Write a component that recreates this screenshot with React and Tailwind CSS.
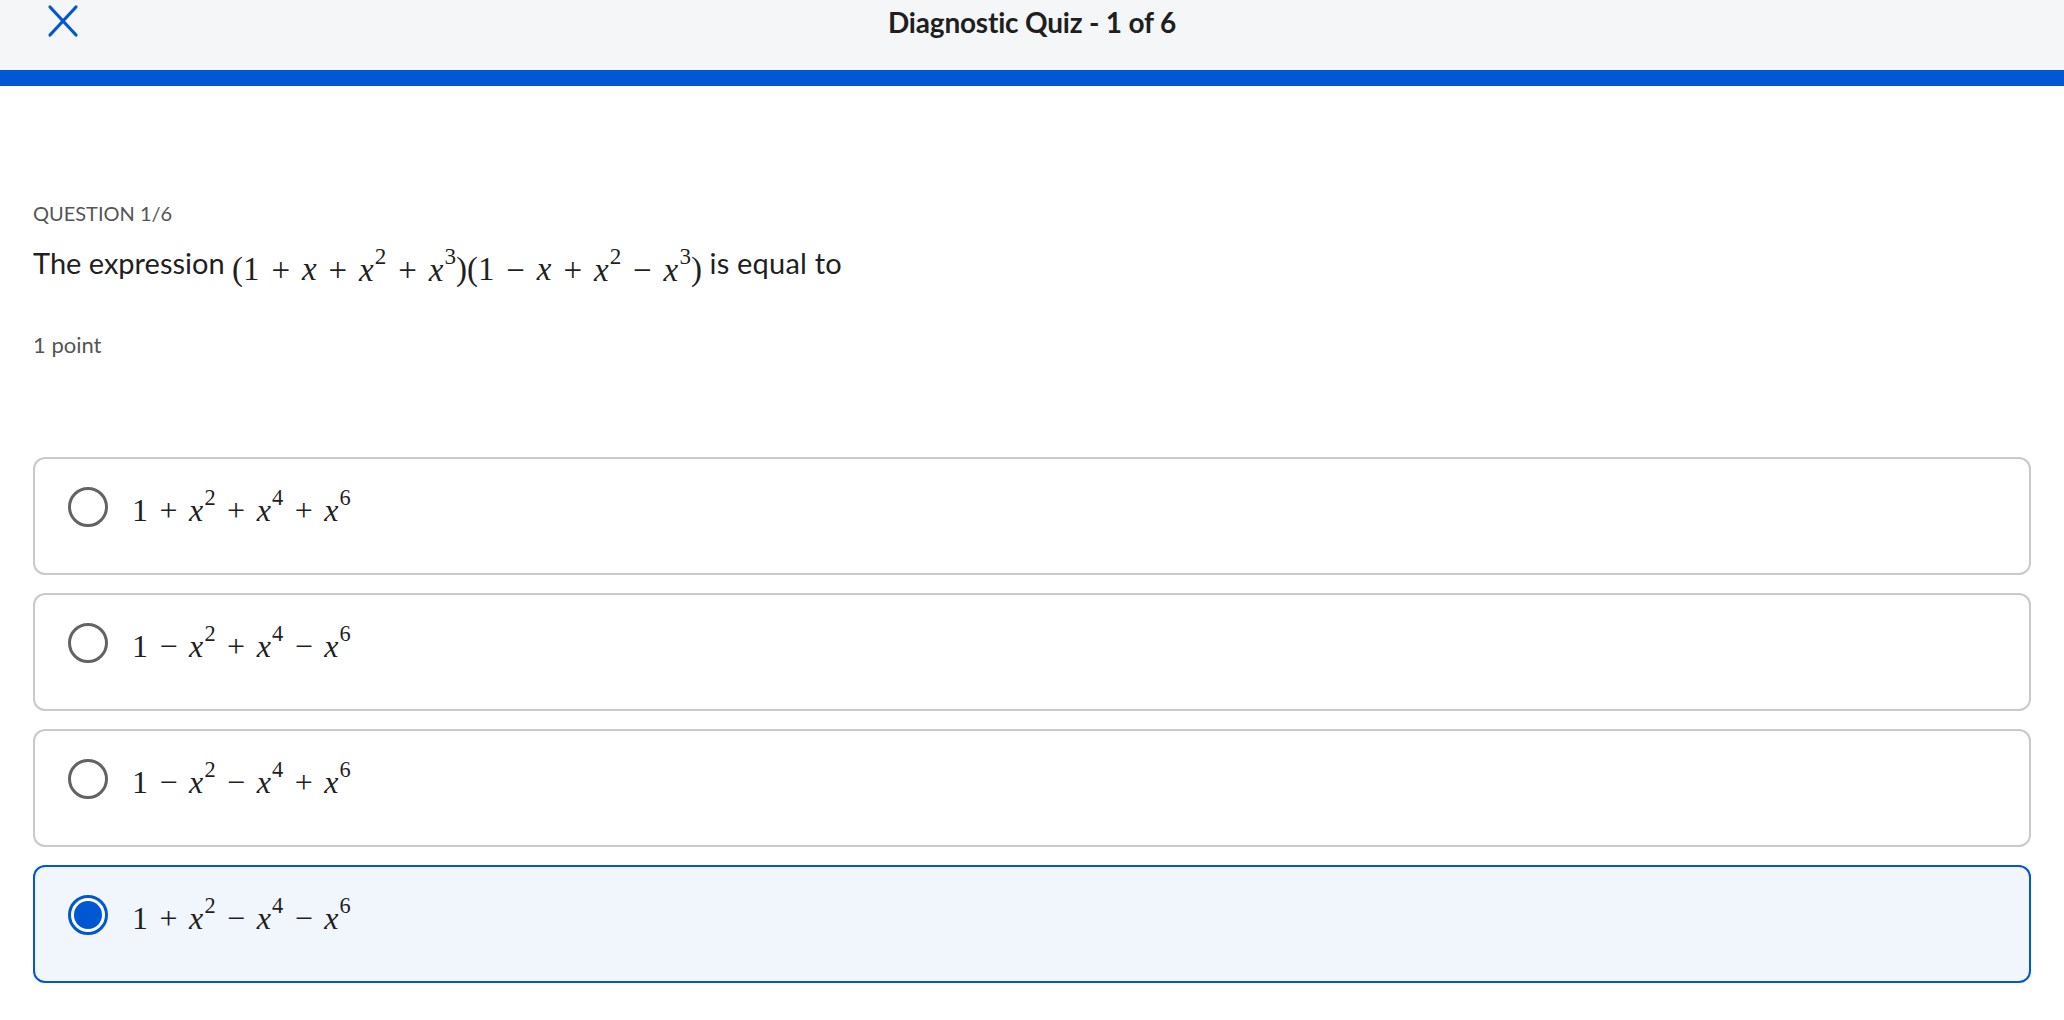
import React from "react";

const Op = ({ children }) => <span className="mx-[0.36em]">{children}</span>;
const X = ({ p }) => (
  <span>
    <i>x</i>
    {p ? <span className="text-[0.7em] align-[0.7em] ml-[0.05em]">{p}</span> : null}
  </span>
);

const Radio = ({ selected }) =>
  selected ? (
    <div className="w-10 h-10 shrink-0 rounded-full border-[3px] border-[#0057d2] bg-white p-[3px]">
      <div className="w-full h-full rounded-full bg-[#0057d2]" />
    </div>
  ) : (
    <div className="w-10 h-10 shrink-0 rounded-full border-[3px] border-[#636363] bg-white" />
  );

const options = [
  { signs: ["+", "+", "+"], selected: false },
  { signs: ["−", "+", "−"], selected: false },
  { signs: ["−", "−", "+"], selected: false },
  { signs: ["+", "−", "−"], selected: true },
];

export default function App() {
  return (
    <div className="min-h-screen bg-white font-['Lato',sans-serif] text-[#1f1f1f]">
      <header className="h-[70px] bg-[#f5f6f8] grid grid-cols-[1fr_auto_1fr] items-start">
        <div className="pl-[46px] pt-[4px]">
          <svg width="34" height="34" viewBox="0 0 34 34" fill="none">
            <path d="M4 3 L30 31 M30 3 L4 31" stroke="#0057d2" strokeWidth="3.2" strokeLinecap="round" />
          </svg>
        </div>
        <h1 className="pt-[5px] text-[28px] leading-[34px] font-bold tracking-[-0.2px]">Diagnostic Quiz - 1 of 6</h1>
        <div />
      </header>
      <div className="h-[16px] bg-[#0057d2]" />
      <main className="px-[33px] pt-[114px]">
        <div className="text-[20px] leading-[26px] text-[#555555] uppercase">Question 1/6</div>
        <div className="mt-[18px] h-[38px] text-[29px] leading-[38px] flex items-center whitespace-nowrap">
          <span>The expression&nbsp;</span>
          <span className="font-['Liberation_Serif',serif] text-[33px]">
            (1<Op>+</Op><X /><Op>+</Op><X p="2" /><Op>+</Op><X p="3" />)(1<Op>−</Op><X /><Op>+</Op><X p="2" /><Op>−</Op><X p="3" />)
          </span>
          <span className="tracking-[0.2px]">&nbsp;is equal to</span>
        </div>
        <div className="mt-[49px] text-[22px] leading-[28px] text-[#555555]">1 point</div>
        <div className="mt-[98px] flex flex-col gap-[18px]">
          {options.map((o, i) => (
            <div
              key={i}
              className={
                o.selected
                  ? "h-[118px] rounded-[12px] border-2 border-[#0057d2] bg-[#f1f6fd] pl-[33px] pt-[28px]"
                  : "h-[118px] rounded-[12px] border-2 border-[#c9c9c9] bg-white pl-[33px] pt-[28px]"
              }
            >
              <div className="flex items-start gap-[24px]">
                <Radio selected={o.selected} />
                <span className="font-['Liberation_Serif',serif] text-[32px] leading-[40px] -mt-[9px] whitespace-nowrap">
                  1<Op>{o.signs[0]}</Op><X p="2" /><Op>{o.signs[1]}</Op><X p="4" /><Op>{o.signs[2]}</Op><X p="6" />
                </span>
              </div>
            </div>
          ))}
        </div>
      </main>
    </div>
  );
}
